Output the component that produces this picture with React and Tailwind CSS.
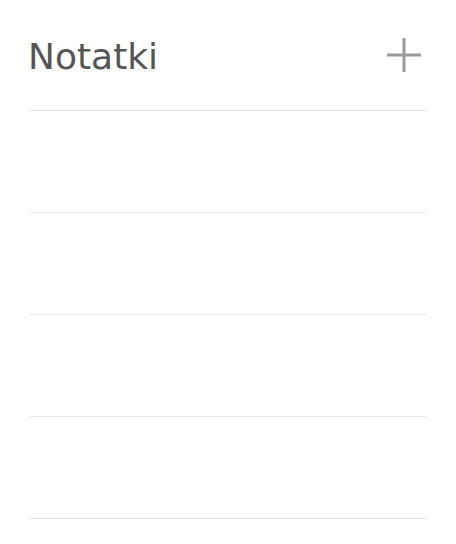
import React from 'react';

const App = () => {
  const notes = [1, 2, 3, 4];

  return (
    <div className="min-h-screen bg-white px-[30px]" style={{ fontFamily: '"DejaVu Sans", sans-serif' }}>
      {/* Header */}
      <div className="flex h-[111px] items-center justify-between border-b border-[#e6e6e6] pb-px">
        <h1 className="text-[36px] leading-none text-[#555555] -ml-[2px] mt-[4px]">Notatki</h1>
        <button className="flex h-[36px] w-[36px] items-center justify-center mr-[4px] mt-[1px]">
          <svg width="36" height="36" viewBox="0 0 36 36">
            <path d="M18 1v34M1 18h34" stroke="#999999" strokeWidth="3" />
          </svg>
        </button>
      </div>

      {/* Notes */}
      {notes.map(n => (
        <div key={n} className="h-[102px] border-b border-[#e6e6e6]"></div>
      ))}
    </div>
  );
};

export default App;
